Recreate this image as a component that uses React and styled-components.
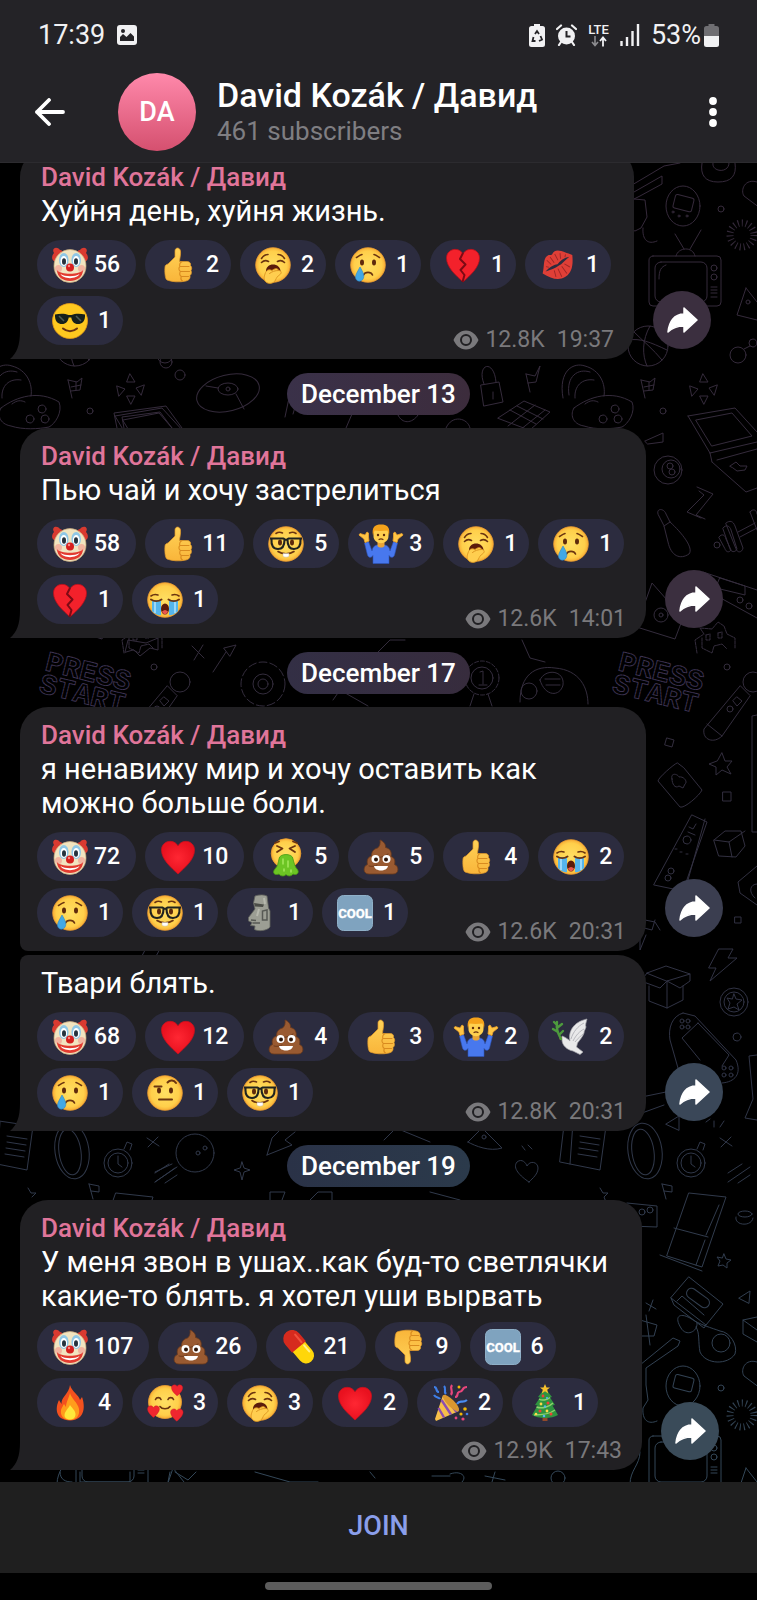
import React from 'react'

import styled, { createGlobalStyle } from 'styled-components'

const GlobalStyle = createGlobalStyle`
  * {
    box-sizing: border-box;
  }

  body {
    margin: 0;
    background: #000;
    color: #fff;
    font-family: Roboto, "Noto Sans", sans-serif;
  }

  button {
    margin: 0;
    padding: 0;
    border: 0;
    background: none;
    color: inherit;
    font: inherit;
    cursor: pointer;
  }

  svg {
    display: block;
    flex: none;
  }`

const Screen = styled.div`
  display: flex;
  flex-direction: column;
  height: 100vh;
  overflow: hidden;`

const TopBar = styled.header`
  flex: none;
  padding-bottom: 8px;
  background: #242327;
  border-bottom: 1px solid #2c2b2f;`
const StatusBar = styled.div`
  display: flex;
  align-items: center;
  height: 70px;
  padding: 0 38px 0 38px;
  color: #f1f1f3;
  font-size: 27px;
  line-height: 32px;`
const StatusGroup = styled.div`
  display: flex;
  align-items: center;
  gap: ${({ $gap }) => $gap}px;
  margin-left: ${({ $end }) => ($end ? 'auto' : '0')};`
const BatteryText = styled.span`
  display: flex;
  align-items: center;
  gap: 3px;`
const Network = styled.span`
  display: flex;
  flex-direction: column;
  align-items: center;
  font-size: 13px;
  font-weight: 500;
  line-height: 12px;`
const TitleBar = styled.div`
  display: flex;
  align-items: center;
  height: 84px;
  padding: 0 28px 0 30px;`
const IconButton = styled.button`
  display: flex;
  align-items: center;
  justify-content: center;
  width: ${({ $width }) => $width}px;
  height: 48px;`
const Avatar = styled.div`
  display: flex;
  align-items: center;
  justify-content: center;
  flex: none;
  width: 78px;
  height: 78px;
  margin: 0 21px 0 48px;
  border-radius: 50%;
  background: linear-gradient(#ff89ab, #d5506f);
  font-size: 27px;
  font-weight: 500;`
const Heading = styled.div`
  flex: 1;
  min-width: 0;`
const Title = styled.h1`
  margin: 0;
  font-size: 34px;
  font-weight: 500;
  line-height: 38px;
  white-space: nowrap;`
const Subtitle = styled.p`
  margin: 0;
  color: #7f7e82;
  font-size: 26px;
  line-height: 34px;`

const Feed = styled.main`
  position: relative;
  z-index: 0;
  display: flex;
  flex: 1;
  flex-direction: column;
  justify-content: flex-end;
  min-height: 0;
  padding: 0 12px 12px 20px;
  overflow: hidden;`
const Wallpaper = styled.svg`
  position: absolute;
  inset: 0;
  z-index: -1;
  width: 100%;
  height: 100%;`
const DateRow = styled.div`
  display: flex;
  flex: none;
  justify-content: center;
  padding: 14px 8px 13px 0;`
const DatePill = styled.time`
  padding: 0 14px;
  border-radius: 21px;
  background: ${({ $tint }) => $tint};
  font-size: 26px;
  font-weight: 500;
  line-height: 42px;`
const MessageRow = styled.article`
  display: flex;
  flex: none;
  align-items: flex-end;
  gap: 19px;
  margin-top: ${({ $joined }) => ($joined ? '4px' : '0')};`
const Bubble = styled.div`
  position: relative;
  flex: 1;
  max-width: ${({ $width }) => $width}px;
  padding: 11px 20px 6px 17px;
  border-radius: ${({ $joined, $tail }) =>
    `${$joined ? 8 : 28}px 28px 28px ${$tail ? 0 : 8}px`};
  background: #212023;`
const Tail = styled.svg`
  position: absolute;
  bottom: 0;
  left: -10px;`
const Author = styled.h2`
  margin: 1px 4px;
  color: #e0759a;
  font-size: 26px;
  font-weight: 500;
  line-height: 32px;`
const Text = styled.p`
  margin: 0 4px;
  font-size: 29px;
  line-height: 34px;`
const Reactions = styled.div`
  display: flex;
  flex-wrap: wrap;
  gap: 7px 9px;
  margin-top: ${({ $tight }) => ($tight ? '9px' : '12px')};`
const Reaction = styled.button`
  display: flex;
  align-items: center;
  justify-content: space-between;
  gap: 6px;
  min-width: 86px;
  height: 49px;
  padding: 0 ${({ $single }) => ($single ? 12 : 16)}px 0 15px;
  border-radius: 25px;
  background: #2c2c3f;
  font-size: 23px;
  font-weight: 500;`
const Meta = styled.div`
  display: flex;
  align-items: center;
  justify-content: flex-end;
  margin-top: ${({ $below }) => ($below ? '11px' : '-18px')};
  color: #7a797c;
  font-size: 23px;
  line-height: 26px;`
const Views = styled.span`
  margin: 0 12px 0 6px;`
const ShareButton = styled.button`
  display: flex;
  align-items: center;
  justify-content: center;
  flex: none;
  width: 58px;
  height: 58px;
  margin-bottom: ${({ $raised }) => ($raised ? 14 : 10)}px;
  border-radius: 50%;
  background: ${({ $tint }) => $tint};`

const BottomBar = styled.footer`
  flex: none;
  background: #1f1f1f;`
const JoinButton = styled.button`
  display: block;
  width: 100%;
  height: 91px;
  padding-bottom: 3px;
  color: #8a9eea;
  font-size: 27px;
  font-weight: 500;`
const NavBar = styled.div`
  display: flex;
  justify-content: center;
  flex: none;
  height: 27px;
  padding-top: 9px;
  background: #000;

  &:after {
    content: '';
    width: 30%;
    height: 8px;
    border-radius: 4px;
    background: #5c5c5c;
  }`

// emoji, all on a 36 x 36 grid

const Face = () => <circle cx="18" cy="18" r="17.3" fill="url(#face)" stroke="#f0a030" strokeWidth="0.8" />

const Eyes = ({ y = 15 }) => <g fill="#5f2a0c">
  <ellipse cx="12" cy={y} rx="2" ry="2.9" />
  <ellipse cx="24" cy={y} rx="2" ry="2.9" />
</g>

const line = { fill: 'none', stroke: '#6b3410', strokeWidth: 1.6, strokeLinecap: 'round', strokeLinejoin: 'round' }

const Thumb = () => <g>
  <path
    d="M5 20C5 18 6.500 17.500 8 17L15 10V4C15 0.500 19.500 -0.300 20.500 4C21 8 19.500 12 19.500 14.500H27C30 14.500 31 16.500 30.500 18.500C32 20 32 22 31 23.500C31.800 25.500 31.500 27.500 30 28.500C30.500 31.500 29 33.500 26 34C20 35.500 12 35 7 33C5 32 4.500 24 5 20Z"
    fill="url(#hand)" stroke="#e39a29" strokeWidth="0.7" />
  <path d="M20 19.500C19 17.500 20 15.500 22 14.800M20.500 24.500C18.500 23.500 18.500 20.500 20 19.500H29M21.500 29.500C19.500 29 19.200 26 20.500 24.500H29.500M21.500 29.500H28.500M21.500 29.500C20.500 31 21 33 22.500 34" fill="none" stroke="#d98b1f" strokeWidth="1.1" strokeLinecap="round" />
</g>

const heartPath = 'M18 35C11 28.500 1.500 20.500 1.500 11C1.500 2 13.500 -1 18 7C22.500 -1 34.500 2 34.500 11C34.500 20.500 25 28.500 18 35Z'

const EMOJI = {
  clown: <g>
    <path d="M6 15C-1 15 -1 9 2 6C-1 1 5 -1 8 3C13 3 10 12 6 15ZM30 15C37 15 37 9 34 6C37 1 31 -1 28 3C23 3 26 12 30 15Z" fill="#d93a30" />
    <ellipse cx="18" cy="19" rx="16" ry="16.500" fill="#f1e4c0" stroke="#c9a97a" strokeWidth="0.7" />
    <circle cx="6.500" cy="21.500" r="3.500" fill="#f2b4a0" />
    <circle cx="29.500" cy="21.500" r="3.500" fill="#f2b4a0" />
    <ellipse cx="11.800" cy="13" rx="4.800" ry="7" fill="#8fc7e6" />
    <ellipse cx="24.200" cy="13" rx="4.800" ry="7" fill="#8fc7e6" />
    <ellipse cx="11.800" cy="14" rx="3.300" ry="5" fill="#fff" />
    <ellipse cx="24.200" cy="14" rx="3.300" ry="5" fill="#fff" />
    <ellipse cx="12" cy="14.500" rx="2" ry="3.300" fill="#26323d" />
    <ellipse cx="24" cy="14.500" rx="2" ry="3.300" fill="#26323d" />
    <path d="M5 23C8 28 28 28 31 23C31 30 25 34 18 34S5 30 5 23Z" fill="#e23a2f" />
    <path d="M8.500 27C13 30 23 30 27.500 27C25 32.500 11 32.500 8.500 27Z" fill="#fff" />
    <circle cx="18" cy="20.500" r="4" fill="#d61f1f" />
    <circle cx="17" cy="19" r="1.200" fill="#ff8a80" />
  </g>,
  thumbsUp: <Thumb />,
  thumbsDown: <g transform="translate(0 36) scale(1 -1)"><Thumb /></g>,
  yawn: <g>
    <Face />
    <path d="M6.500 11.500C8 9 10.500 7.500 13 7.500M29.500 11.500C28 9 25.500 7.500 23 7.500M6.500 15.500C8.500 13.500 11 13 13.500 14.500M29.500 15.500C27.500 13.500 25 13 22.500 14.500" {...line} />
    <path d="M11 25C10 15 26 15 25.500 25Z" fill="#5b1b0b" />
    <path d="M10 27C11 23 14 22 17 23.500C20 21 23 21 23.500 23.500C26.500 23.500 27 26 25 27.500C22 29.500 21.500 31 20.500 33C19 36.500 13.500 37.500 11 35C8.500 33 9 30 10 27Z" fill="#ffce4f" stroke="#dc9420" strokeWidth="0.900" />
    <path d="M14.500 26.500C17 24.500 20 23.500 23.500 23.500" {...line} stroke="#dc9420" strokeWidth="1" />
  </g>,
  cry: <g>
    <Face />
    <Eyes y={15.5} />
    <path d="M6.500 10.500C8 9.500 10 8 12 7.500M29.500 10.500C28 9.500 26 8 24 7.500M13.500 28C15 24.500 21 24.500 22.500 28" {...line} />
    <path d="M10 20C13 25 14.500 28 13.500 31C12 35.500 6 35 5.500 30.500C5.500 27 8 24 10 20Z" fill="#42a8e6" stroke="#2d86c8" strokeWidth="0.6" />
  </g>,
  brokenHeart: <g>
    <path d={heartPath} fill="#f3212b" stroke="#b80f1b" strokeWidth="0.800" />
    <path d="M18 6L15 12L20.500 17.500L15.500 23L19.500 28L17.500 35" fill="none" stroke="#7d0a14" strokeWidth="2" strokeLinejoin="round" />
  </g>,
  kiss: <g transform="rotate(-32 18 18)">
    <path d="M0.500 17C6 12 8.500 4.500 14 4.500C16 4.500 17 6 18 6C19 6 20 4.500 22 4.500C27.500 4.500 31 12 35.500 17C31 26 26 32 18 32S5 26 0.500 17Z" fill="#df3f37" />
    <path d="M4 17C10 15 14 15.500 18 17C22 15.500 27 15 32 17C27 17.500 22 19.500 18 19C14 19.500 9 18 4 17Z" fill="#2c2c3f" />
    <path d="M11 8L12.500 14M15.500 7L16 14M21 7L20.500 14M26 9L23.500 14M10 27L12 20.500M15 30L16 21M21 30L20.500 21M27 26L24 20.500M7 13L9 15M30 13L28 15" stroke="#9c2626" strokeWidth="0.900" />
  </g>,
  sunglasses: <g>
    <circle cx="18" cy="18" r="17.500" fill="#ffc91f" stroke="#e99a17" strokeWidth="0.800" />
    <path d="M3 11.500C8 10.500 13 10.500 16.500 12H19.500C23 10.500 28 10.500 33 11.500V13.500C32.500 19 30 21 26 21C22 21 20 18.500 19.300 14.500H16.700C16 18.500 14 21 10 21C6 21 3.500 19 3 13.500Z" fill="#16201c" />
    <path d="M7 13L12 18M24 13L29 18" stroke="#4c5a54" strokeWidth="1.500" />
    <path d="M11 25.500C15 29 21 29 25 25.500" {...line} strokeWidth="2" />
  </g>,
  nerd: <g>
    <Face />
    <Eyes y={16.500} />
    <path d="M8 7.500C10 6 12.500 6 14.500 7M28 7.500C26 6 23.500 6 21.500 7" {...line} />
    <path d="M10 25.500C14 28.500 22 28.500 26 25.500" {...line} />
    <path d="M15 27.500H21V30C21 31.500 15 31.500 15 30Z" fill="#fff" stroke="#c9b9a0" strokeWidth="0.500" />
    <path d="M2 12.500H15.500C17 14 19 14 20.500 12.500H34M3.500 13.500C3 20 5.500 23 10 23C14.500 23 16.500 20 16.500 14M32.500 13.500C33 20 30.500 23 26 23C21.500 23 19.500 20 19.500 14" fill="none" stroke="#1f2220" strokeWidth="2.100" strokeLinejoin="round" />
  </g>,
  shrug: <g>
    <path d="M1.500 17L5.500 15.500L9 25C9.500 21.500 11 19.500 14 19H22C25 19.500 26.500 21.500 27 25L30.500 15.500L34.500 17L31.500 29C30.500 32 27.500 32 26 29.500V37.500H10V29.500C8.500 32 5.500 32 4.500 29Z" fill="#4878ee" stroke="#2d55bf" strokeWidth="0.600" />
    <path d="M2 16.500L1 13L-4 9L-3 7.500L2 9L4 6L5.500 7L5.500 11L6 15ZM34 16.500L35 13L40 9L39 7.500L34 9L32 6L30.500 7L30.500 11L30 15Z" fill="#ffc645" stroke="#f0a52b" strokeWidth="0.800" strokeLinejoin="round" />
    <path d="M14.500 16H21.500V20C20 22 16 22 14.500 20Z" fill="#e9a437" />
    <path d="M10.500 4C12 -1 24 -1 25.500 4V10C25.500 19.500 10.500 19.500 10.500 10Z" fill="#ffd04f" />
    <path d="M10 9.500C8.500 1 12 -1.500 18 -1.500S27.500 1 26 9.500L24.500 4.500C20 5 15 5 11.500 4.500Z" fill="#f5a21b" />
    <circle cx="15" cy="9" r="1.200" fill="#5f2a0c" />
    <circle cx="21" cy="9" r="1.200" fill="#5f2a0c" />
    <path d="M16 13.500C17 12.800 19 12.800 20 13.500" {...line} strokeWidth="1.200" />
  </g>,
  sob: <g>
    <Face />
    <path d="M4 14C6 12.500 8 12 11 13M32 14C30 12.500 28 12 25 13" {...line} />
    <path d="M5 18H14V33C10.500 34 7 31 5 29ZM31 18H22V33C25.500 34 29 31 31 29Z" fill="#55b5ec" />
    <path d="M8 20V31M28 20V31" stroke="#9bd8f8" strokeWidth="2" />
    <path d="M4 17.500C7 19.500 11.500 19.500 14.500 17.500M32 17.500C29 19.500 24.500 19.500 21.500 17.500" {...line} strokeWidth="2" />
    <ellipse cx="18" cy="27" rx="4" ry="5.500" fill="#5b1b0b" />
    <path d="M15 29.500C17 27.500 19 27.500 21 29.500C20 33 16 33 15 29.500Z" fill="#e8584f" />
  </g>,
  heart: <path d={heartPath} fill="url(#red)" stroke="#c8101c" strokeWidth="0.800" />,
  vomit: <g>
    <circle cx="18" cy="14.500" r="14.800" fill="url(#face)" stroke="#f0a030" strokeWidth="0.800" />
    <path d="M9 7L14.500 9.500L9 13M27 7L21.500 9.500L27 13M7 4L11 2.500M29 4L25 2.500" {...line} strokeWidth="1.800" />
    <path d="M11 20C11 14 25 14 25 20C26 24 27 28 29 30C32 33 29 37 25 35C23 38 19 37 18 35.500C16 38 12 37 11 35C6 37 4 33 7 30C10 27 10 24 11 20Z" fill="#6cc524" stroke="#469a14" strokeWidth="0.800" />
    <path d="M15 20V25M20 22V28M16 30V32M23 31V33" stroke="#a4e85c" strokeWidth="1.500" strokeLinecap="round" />
  </g>,
  poo: <g>
    <path d="M17 1C20 2 23 5 22.500 8.500C27 9.500 29 13 28 17.500C31.500 18.500 32.500 22 31.500 25.500C36 27 36.500 35 30 35H6C-0.500 35 0 27 4.500 25.500C3.500 21 5 18 8.500 17C8.500 12 11 10 14.500 9C17 7.500 17.500 4 17 1Z" fill="#995a31" stroke="#6b3a1c" strokeWidth="0.800" />
    <path d="M9 18C14 19.500 20 18.500 25 15M6 27C9 28 12 27 14 26" {...line} stroke="#6d3a1c" strokeWidth="1" />
    <circle cx="12.500" cy="20" r="4" fill="#fff" />
    <circle cx="23.500" cy="20" r="4" fill="#fff" />
    <circle cx="13" cy="20.500" r="2" fill="#2b1408" />
    <circle cx="23" cy="20.500" r="2" fill="#2b1408" />
    <path d="M11 27H25C24 33 12 33 11 27Z" fill="#fff" />
  </g>,
  moai: <g>
    <path d="M13 1C17 -0.500 22 -0.500 25 1L26.500 13L28 16V32C25 36 16 36.500 12.500 34.500L13 31L8.500 30.500L10 27.500L6.500 26V22.500L13 14L11.500 8Z" fill="#9c9e94" stroke="#62645e" strokeWidth="0.800" />
    <path d="M12 8L22 9.500L21 12L13 11.500Z" fill="#4b4d47" />
    <path d="M9 25L14 25.500M10.500 28L18 28M20.500 16V25H25V15Z" fill="none" stroke="#575954" strokeWidth="1.500" />
    <path d="M22 3L23 9M17 14L15 21" stroke="#b7b9ae" strokeWidth="2" />
  </g>,
  cool: <g>
    <rect x="0.500" y="0.500" width="35" height="35" rx="6" fill="#7fa3bf" stroke="#8fb0c8" />
    <text x="18" y="23" textAnchor="middle" fontFamily="Roboto, sans-serif" fontSize="13" fontWeight="700" fill="#fff" stroke="#fff" strokeWidth="0.400">COOL</text>
  </g>,
  dove: <g>
    <path d="M9 17C12 18 15 20 17 22C15 13 20 3 34 0C33 4 32 6 33 8C32 11 31 12 31 14C30 17 27 21 24.500 24L23.500 28L30 33L27 35.500L20 32C14 31 9 26 9 21Z" fill="#e9e9ea" stroke="#a5a5aa" strokeWidth="0.700" />
    <path d="M18 20C20 13 25 7 31 4M20 22C23 16 27 12 31 10M22 23C25 19 28 17 30 15" fill="none" stroke="#b7b7bd" strokeWidth="1" />
    <path d="M9 18L6 20L9 21Z" fill="#e39a29" />
    <path d="M8 20C5 14 3 10 4 3M5 13L0 10M4 9L9 5M6 16L10 12M4 6L1 3" fill="none" stroke="#4d9a3d" strokeWidth="2.400" strokeLinecap="round" />
  </g>,
  eyebrow: <g>
    <Face />
    <Eyes y={15.500} />
    <path d="M7.500 11.500H14.500M20.500 7.500C23 4.500 27 5 29 8M12 24.500H25" {...line} strokeWidth="2" />
  </g>,
  pill: <g transform="rotate(50 18 18)">
    <rect x="-1" y="10" width="38" height="16" rx="8" fill="#ffd60a" />
    <path d="M18 9H7.500A9 9 0 0 0 7.500 27H18Z" fill="#d62a1e" />
    <path d="M6 13H16" stroke="#f0503c" strokeWidth="2" strokeLinecap="round" />
    <path d="M20 13H28" stroke="#fff08a" strokeWidth="2" strokeLinecap="round" />
  </g>,
  fire: <g>
    <path d="M18 0C20 7 27 10 28 15L30 12C33 20 34 35 18 35.500C3 35 3 23 7 15L9.500 19C9 12 17 9 18 0Z" fill="#f4511e" />
    <path d="M18 8C19 13 26 18 27 24C28 31 24 35 18 35S8 31 9 25C10 22 11 21 12 19L14 22C14 17 17 13 18 8Z" fill="#ff9d1c" />
    <path d="M18 20C20 23 24 26 23.500 30C23 33 21 34.500 18 34.500S12.500 33 12.500 30C13 26 16 24 18 20Z" fill="#ffe83b" />
  </g>,
  hearts: <g>
    <circle cx="18" cy="17" r="16.500" fill="url(#face)" stroke="#f0a030" strokeWidth="0.800" />
    <path d="M8.500 14.500C9.500 12 13 12 14 14.500M21 14.500C22 12 25.500 12 26.500 14.500M13 21.500C15 24.500 21 24.500 23 21.500" {...line} />
    <g fill="#f0262f" stroke="#c3141f" strokeWidth="1">
      <path d={heartPath} transform="translate(24 -1) scale(0.340)" />
      <path d={heartPath} transform="translate(0 20) scale(0.360)" />
      <path d={heartPath} transform="translate(23 23) scale(0.380)" />
    </g>
  </g>,
  party: <g>
    <path d="M11 10L27 26L4 36L3 34Z" fill="#f7c04a" />
    <path d="M9.500 15L19 29.500M6.500 23L12 32.500M12 11L24.500 27" stroke="#8d4fb0" strokeWidth="2.400" />
    <ellipse cx="19" cy="18" rx="3.500" ry="11" transform="rotate(-45 19 18)" fill="#d99730" />
    <path d="M2 2C6 2 3 7 7 7M12 1C15 4 11 6 14 9M2 10C4 13 7 12 8 14" fill="none" stroke="#3f7fe8" strokeWidth="2.200" />
    <path d="M20 0C17 4 22 6 19 10M35 2C29 2 32 7 27 7C24 8 27 12 23 12" fill="none" stroke="#e8467c" strokeWidth="2.200" />
    <path d="M25 19C28 14 30 19 35 15" fill="none" stroke="#4a8cf0" strokeWidth="2.200" />
    <g fill="#f2b705"><circle cx="27" cy="2" r="1.500" /><circle cx="33" cy="24" r="1.800" /><circle cx="29" cy="29" r="1.600" /></g>
    <g fill="#e8467c"><circle cx="31" cy="34" r="1.600" /><circle cx="24" cy="33" r="1.400" /></g>
    <circle cx="35" cy="29" r="1.300" fill="#3f7fe8" />
  </g>,
  tree: <g>
    <path d="M15.500 30H20.500V36H15.500Z" fill="#93492a" />
    <path d="M18 3L25 12L23 12.500L28 20L25.500 20.500L31 30C25 34 11 34 5 30L10.500 20.500L8 20L13 12.500L11 12Z" fill="#2f9440" />
    <path d="M12 14C15 16 20 15 23 12.500M9.500 22C15 24 22 22 26 18M7 30C15 30 24 28 28 25" fill="none" stroke="#8fd36a" strokeWidth="1.400" />
    <path d="M18 -1L19.500 2.500H23L20.200 4.800L21.200 8.500L18 6.300L14.800 8.500L15.800 4.800L13 2.500H16.500Z" fill="#f8c22c" />
    <g fill="#ef4136"><circle cx="16" cy="11" r="1.400" /><circle cx="21" cy="18" r="1.500" /><circle cx="13" cy="26" r="1.500" /><circle cx="24" cy="29" r="1.500" /></g>
    <g fill="#ffd84a"><circle cx="14" cy="19" r="1.400" /><circle cx="20" cy="26" r="1.400" /><circle cx="9" cy="29" r="1.300" /></g>
    <g fill="#58b4f2"><circle cx="18" cy="21.500" r="1.200" /><circle cx="17" cy="31" r="1.300" /><circle cx="20" cy="13" r="1.100" /></g>
  </g>
}

const Emoji = ({ name }) => <svg width="36" height="36" viewBox="0 0 36 36" overflow="visible" role="img" aria-label={name}>
  {EMOJI[name]}
</svg>

const EmojiPaints = () => <defs>
  <radialGradient id="face">
    <stop offset="0" stopColor="#ffdf63" />
    <stop offset="0.800" stopColor="#ffcf4a" />
    <stop offset="1" stopColor="#f7ae37" />
  </radialGradient>
  <linearGradient id="hand" x1="0" y1="0" x2="0" y2="1">
    <stop offset="0" stopColor="#ffd257" />
    <stop offset="1" stopColor="#f9b53a" />
  </linearGradient>
  <radialGradient id="red">
    <stop offset="0" stopColor="#ff2733" />
    <stop offset="1" stopColor="#e9111f" />
  </radialGradient>
</defs>

// one column of doodles, repeated every 573 units across the feed

const Doodles = () => <g id="doodles">
  <path d="M627 188L664 166L680 163M627 196L662 176V184L640 196L634 199L645 200L647 217L641 228L635 231L627 228M643 228C642 240 648 245 657 241" />
  <path d="M702 163C700 175 705 182 718 182C731 182 737 176 735 163M713 163C711 172 729 174 729 163" />
  <ellipse cx="683" cy="206" rx="17" ry="20" />
  <rect x="674" y="196" width="19" height="14" rx="2" transform="rotate(14 683 203)" />
  <circle cx="673" cy="212" r="1" /><circle cx="679" cy="216" r="1" /><circle cx="687" cy="216" r="1" />
  <circle cx="721" cy="209" r="3" />
  <circle cx="742" cy="235" r="12" strokeWidth="7" strokeDasharray="1 3" strokeLinecap="butt" />
  <path d="M757 182C745 178 740 190 744 196L760 208" />
  <rect x="649" y="256" width="72" height="50" rx="4" /><rect x="655" y="262" width="52" height="40" rx="6" />
  <circle cx="714" cy="268" r="3" /><circle cx="714" cy="277" r="3" />
  <path d="M711 287H717M711 290H717M711 293H717M711 297H717M659 279C659 270 661 267 666 265M684 249L675 234M690 249L701 230M676 256C678 247 693 246 695 256" />
  <path d="M746 288L737 315L757 320M746 288L757 302" /><circle cx="748" cy="302" r="2" />
  <circle cx="648" cy="346" r="20" /><path d="M629 340C640 338 650 342 667 350M650 326C642 340 642 355 647 366M634 332C642 340 654 350 662 360" />
  <circle cx="738" cy="355" r="8" /><circle cx="753" cy="343" r="4" /><path d="M744 349L750 346" />
  <path d="M563 398C558 370 574 362 585 366C600 370 606 384 604 396M569 395C566 376 578 368 590 372M575 398C574 386 582 378 594 380" />
  <path d="M574 408C590 396 612 390 632 402C636 412 628 424 622 427C612 429 596 430 584 426C572 424 570 414 574 408ZM585 404C590 400 594 400 598 402" />
  <circle cx="615" cy="409" r="4" /><circle cx="603" cy="419" r="4" /><circle cx="618" cy="419" r="4" />
  <path d="M645 398L641 380M641 380L650 382L655 378L653 390L644 391M649 382V390M654 385L644 387" />
  <path d="M703 374L708 382L700 382ZM690 386L698 389L692 396ZM717 385L709 388L714 395ZM700 396H708L704 404Z" />
  <circle cx="663" cy="411" r="3" />
  <path d="M688 416L735 408L757 432M688 416L710 453M696 420L732 413L752 436L712 446ZM710 453L757 442M712 462L746 492L757 488M710 453L712 462M717 460L757 449M730 466L736 462L740 466H747L745 470L737 471L733 468Z" />
  <circle cx="668" cy="470" r="14" /><circle cx="671" cy="469" r="9" /><circle cx="670" cy="466" r="3" /><circle cx="672" cy="472" r="3" />
  <path d="M645 441L663 433V442L648 444ZM697 487L713 494L696 515L705 519M699 491L704 495L687 512L701 518" />
  <path d="M658 514C656 508 664 508 666 514L670 522C682 533 694 548 689 554C680 560 671 556 668 542L664 526ZM664 526L670 522" />
  <circle cx="717" cy="545" r="3" />
  <path d="M719 537C722 533 725 535 726 539L731 550C729 553 726 552 725 549ZM723 528C726 524 730 526 731 530L737 549C735 553 731 552 730 549ZM726 523C730 520 733 521 735 526L743 548C742 553 737 553 736 549ZM738 532L755 523M740 537L757 528M750 512C753 508 757 510 757 514M750 512L757 530" />
  <path d="M627 624L675 639L683 618L652 583L637 625" /><circle cx="661" cy="615" r="7" /><circle cx="661" cy="615" r="2" />
  <path d="M703 572L757 590M706 590L757 618M720 578L745 586V595L716 588Z" /><circle cx="740" cy="600" r="3" /><circle cx="749" cy="606" r="3" />
  <path d="M697 653L695 640L704 634L700 628L712 629L718 622L724 626L727 634L735 638V648M702 638V648L712 653L714 646L722 644L727 649M706 635V640H710V634ZM718 633V638H722V632Z" strokeDasharray="3 1" />
  <g fontFamily="Liberation Mono, monospace" fontSize="29" fontWeight="700" stroke="#3d3352" strokeDasharray="2 1">
    <text transform="translate(617 670) rotate(14)">PRESS</text>
    <text transform="translate(611 692) rotate(14)">START</text>
  </g>
  <circle cx="727" cy="667" r="3" />
  <circle cx="753" cy="682" r="10" /><path d="M740 686L704 729C702 740 714 744 722 736L750 696ZM707 724L722 736M737 697L742 701L737 706L733 701Z" /><circle cx="730" cy="709" r="3" />
  <path d="M667 738L674 740L672 747L665 745ZM722 753L725 761L732 761L727 767L731 774L722 770L716 775V767L709 764L717 761Z" />
  <path d="M677 763C674 764 658 778 658 781L680 807C684 809 700 795 702 790L684 768ZM672 779C670 772 678 774 679 777C684 776 688 782 685 784L683 788L679 786C675 789 672 784 672 779Z" />
  <path d="M723 792H731V801H723ZM757 715L752 716V832H757M735 917H741V923H735Z" />
  <path d="M692 815L707 822L683 891L654 885ZM705 819L688 880M689 827L693 829L696 824M688 832L695 835" /><circle cx="687" cy="840" r="4" /><circle cx="671" cy="871" r="3" /><circle cx="668" cy="878" r="3" />
  <path d="M675 849H677M680 852H682M686 854H688M714 840L725 831H741L745 846L736 857L719 856ZM714 840L729 842L745 831M729 842L732 857" />
  <path d="M757 866L738 882L740 893L757 905M757 884C750 884 748 892 755 898" />
  <path d="M627 910L640 915L645 920L655 922L660 930M632 925L652 930L655 920M627 944L640 925V950L646 935" />
  <path d="M647 973L666 966L690 974L667 981ZM647 973L641 981L660 988L667 981L680 988L690 981L690 974M649 986V1001L667 1008L683 1000V986M667 981V1008" />
  <path d="M719 949H733L728 958H737L710 981L716 968H709Z" />
  <circle cx="734" cy="1002" r="14" /><circle cx="734" cy="1002" r="10" /><path d="M734 994L736 999L742 1000L737 1004L739 1010L734 1007L728 1009L730 1003L727 998L732 999Z" />
  <circle cx="737" cy="1037" r="4" />
  <path d="M683 1013C672 1016 668 1028 670 1040L678 1068M683 1013L695 1016L736 1060C742 1074 735 1082 722 1083M698 1023L729 1055L722 1066M698 1023L682 1038L700 1060" />
  <circle cx="682" cy="1021" r="2" /><circle cx="688" cy="1021" r="2" /><circle cx="682" cy="1027" r="2" /><circle cx="688" cy="1027" r="2" />
  <circle cx="724" cy="1068" r="2" /><circle cx="731" cy="1068" r="2" /><circle cx="724" cy="1075" r="2" /><circle cx="731" cy="1075" r="2" />
  <path d="M757 1055L749 1056L753 1099L745 1118L757 1120M627 1100L666 1092M642 1113L664 1105M666 1124L679 1116V1130ZM706 1122L710 1119M714 1127L714 1121M720 1127L724 1121" />
  <ellipse cx="645" cy="1151" rx="17" ry="28" transform="rotate(-8 645 1151)" /><ellipse cx="643" cy="1152" rx="11" ry="23" transform="rotate(-8 643 1152)" />
  <circle cx="691" cy="1163" r="14" /><circle cx="691" cy="1163" r="10" /><path d="M691 1156V1164L695 1167M697 1149L700 1142L705 1144L703 1150M720 1138L732 1146M731 1137L721 1147M728 1173L742 1164M728 1182L750 1167M738 1183L750 1175M662 1184L666 1199M662 1184L672 1186V1192L664 1191" />
  <path d="M565 1120L606 1126L600 1170L560 1162ZM573 1122L570 1164M580 1136L600 1139M580 1142L599 1145M579 1148L598 1151M578 1154L597 1157" />
  <path d="M689 1193L726 1197L702 1267L667 1256ZM674 1228L708 1237M719 1205L706 1235M660 1255L702 1271M705 1240L696 1265" /><ellipse cx="745" cy="1214" rx="7" ry="3" /><path d="M736 1217C734 1226 752 1227 753 1218" />
  <path d="M627 1203L657 1206V1227L630 1226" /><circle cx="642" cy="1212" r="3" /><circle cx="650" cy="1210" r="3" />
  <path d="M724 1254L726 1259L731 1260L727 1263L727 1268L723 1265L718 1266L720 1261L717 1257L722 1258ZM739 1298L750 1291L749 1303ZM646 1303L656 1309M653 1300L649 1311M640 1320L657 1325L654 1336L640 1336ZM646 1315L650 1345" />
  <path d="M689 1277L723 1304L706 1325L671 1298ZM671 1298L674 1305L704 1328L706 1325M677 1301L682 1296L704 1315" /><rect x="685" y="1293" width="26" height="10" rx="5" transform="rotate(36 698 1298)" />
  <path d="M697 1323C698 1332 686 1337 681 1328C674 1317 679 1312 690 1318C700 1325 712 1328 720 1331C730 1332 738 1345 735 1354C728 1365 706 1365 700 1352C698 1342 700 1333 696 1327" /><circle cx="721" cy="1343" r="9" />
  <path d="M757 1317L743 1320V1334L757 1342M743 1320L757 1330M757 1362C745 1358 740 1370 744 1376L760 1388" />
  <path d="M640 1365L673 1338L680 1341L678 1346L646 1368V1385L648 1400L643 1408C642 1420 648 1425 657 1421" />
  <ellipse cx="683" cy="1386" rx="17" ry="20" /><rect x="674" y="1376" width="19" height="14" rx="2" transform="rotate(14 683 1383)" />
  <circle cx="721" cy="1388" r="3" /><circle cx="742" cy="1415" r="12" strokeWidth="7" strokeDasharray="1 3" strokeLinecap="butt" />
  <rect x="649" y="1436" width="72" height="50" rx="4" /><rect x="655" y="1442" width="52" height="40" rx="6" /><circle cx="714" cy="1448" r="3" /><circle cx="714" cy="1457" r="3" />
  <path d="M711 1467H717M711 1470H717M711 1473H717M746 1468L737 1495M746 1468L757 1482M640 1452C640 1465 630 1470 630 1484" />
</g>

// doodles that only show between the bubbles

const GapDoodles = () => <g>
  <ellipse cx="228" cy="393" rx="32" ry="18" transform="rotate(-14 228 393)" /><ellipse cx="228" cy="389" rx="10" ry="6" /><circle cx="228" cy="389" r="2" />
  <path d="M236 394L244 409M206 386L218 388" />
  <circle cx="180" cy="375" r="5" /><circle cx="166" cy="362" r="6" />
  <path d="M117 428L114 413L166 406L182 428M124 428L122 417L160 412L172 428" />
  <path d="M285 417L289 398L297 400L293 414M340 414H352L346 428M398 415C402 424 412 424 418 415M446 428C452 414 468 418 470 428" />
  <path d="M481 385L499 382L503 402L484 406ZM484 384C476 364 494 358 496 382M493 392V399" />
  <path d="M530 398L526 380M526 380L535 382L540 372L536 388L528 389" transform="translate(0 -6)" />
  <path d="M498 418L524 401L550 412L530 430ZM510 410L536 424M517 406L543 419M508 426L535 405M520 430L545 410" />
  <path d="M125 652L128 640L146 643L158 638V650L150 648L140 656L134 650ZM192 646L204 658M203 645L194 660M213 672L226 652M224 648L236 645L230 656Z" />
  <circle cx="263" cy="684" r="22" strokeDasharray="8 3" /><circle cx="263" cy="684" r="10" /><circle cx="263" cy="684" r="5" />
  <path d="M333 700L340 690L368 706M372 658L390 640H405" />
  <circle cx="482" cy="678" r="17" strokeDasharray="4 2" /><circle cx="482" cy="678" r="11" /><path d="M480 672L483 671V684M479 685H487M474 694L470 706M488 694L492 706" />
  <path d="M520 702C520 675 535 665 555 668C580 670 588 688 588 704M540 680C545 668 565 670 563 685C560 697 545 697 540 680ZM545 679H560M546 685H560" /><circle cx="529" cy="691" r="8" />
  <path d="M522 640L530 658L545 662" />
  <circle cx="195" cy="1153" r="19" /><circle cx="205" cy="1148" r="2" /><circle cx="198" cy="1153" r="2" />
  <path d="M242 1162L244 1168L250 1170L244 1172L242 1180L240 1172L234 1170L240 1168ZM267 1155L272 1138L280 1130M267 1155L292 1145L285 1140L295 1132M155 1172L172 1164M155 1182L175 1168" />
  <path d="M384 1140L396 1128L430 1142M468 1142L482 1128L502 1148C490 1152 475 1146 468 1142ZM529 1182C520 1176 512 1168 517 1162C522 1158 526 1163 527 1166C530 1160 538 1162 538 1168C538 1174 533 1178 529 1182ZM522 1146L525 1150M528 1145L532 1149" />
  <circle cx="484" cy="1137" r="2" /><path d="M270 1200V1192H285L282 1200M310 1200L318 1192H332V1200M600 1188L603 1193L608 1193L604 1197L606 1202M28 1188L31 1193L36 1193L32 1197M430 1192L460 1200" />
  <path d="M60 1472C60 1480 66 1482 72 1482M80 1472V1482H130V1472M170 1472L168 1482M175 1472L188 1480L196 1472M255 1472L290 1482H318M370 1472L375 1478M432 1476H450M450 1474C460 1470 468 1476 462 1482M485 1476L505 1480M495 1472L492 1482" /><circle cx="558" cy="1478" r="7" />
</g>

const FeedWallpaper = () => <Wallpaper viewBox="0 163 757 1319" preserveAspectRatio="xMidYMin slice" aria-hidden="true">
  <EmojiPaints />
  <defs>
    <linearGradient id="ink" gradientUnits="userSpaceOnUse" x1="0" y1="163" x2="0" y2="1482">
      <stop offset="0" stopColor="#35293a" />
      <stop offset="0.400" stopColor="#332c3c" />
      <stop offset="0.700" stopColor="#2f3446" />
      <stop offset="1" stopColor="#334758" />
    </linearGradient>
  </defs>
  <g fill="none" stroke="url(#ink)" strokeLinejoin="round" strokeLinecap="round">
    <Doodles />
    <use href="#doodles" x="-573" />
    <GapDoodles />
  </g>
</Wallpaper>

const ShareIcon = () => <svg width="32" height="28" viewBox="-16 -14 32 28">
  <path d="M2 -12L15 0L2 12V6C-6 6 -10 8 -14 12C-13 2 -8 -6 2 -6Z" fill="#fff" stroke="#fff" strokeWidth="1.500" strokeLinejoin="round" />
</svg>

const EyeIcon = () => <svg width="26" height="20" viewBox="0 0 26 20">
  <path fillRule="evenodd" d="M13 0.500C19 0.500 23.500 5 25.500 10C23.500 15 19 19.500 13 19.500S2.500 15 0.500 10C2.500 5 7 0.500 13 0.500ZM13 4A6 6 0 1 0 13 16A6 6 0 1 0 13 4Z" fill="currentColor" />
  <circle cx="13" cy="10" r="4" fill="currentColor" />
</svg>

const PictureIcon = () => <svg width="20" height="20" viewBox="0 0 20 20">
  <rect width="20" height="20" rx="3" fill="currentColor" />
  <circle cx="6" cy="6" r="2" fill="#242327" />
  <path d="M3 16V12L6 9L9.500 12L13.500 8L17 11.500V16Z" fill="#242327" />
</svg>

const BatterySaverIcon = () => <svg width="16" height="23" viewBox="0 0 16 23">
  <path d="M5 0H11V2H13.500Q16 2 16 4.500V20.500Q16 23 13.500 23H2.500Q0 23 0 20.500V4.500Q0 2 2.500 2H5Z" fill="currentColor" />
  <path d="M6 10L8 7L10 10M11.500 12L13 15.500L10 17M6.500 17H3.500L4.500 13" fill="none" stroke="#242327" strokeWidth="1.800" />
</svg>

const AlarmIcon = () => <svg width="21" height="22" viewBox="0 0 21 22">
  <circle cx="10.500" cy="12" r="8.500" fill="currentColor" />
  <path d="M1 5L5 1.500M20 5L16 1.500M5 18L3 21M16 18L18 21" stroke="currentColor" strokeWidth="2.200" strokeLinecap="round" />
  <path d="M10.500 7V12.500H14.500" fill="none" stroke="#242327" strokeWidth="2" />
</svg>

const DataArrowsIcon = () => <svg width="18" height="11" viewBox="0 0 18 11">
  <path d="M5 0V9M2 6L5 9.500L8 6" fill="none" stroke="#8d8c90" strokeWidth="1.600" />
  <path d="M13 10.500V1.500M10 5L13 1.500L16 5" fill="none" stroke="currentColor" strokeWidth="1.800" />
</svg>

const SignalIcon = () => <svg width="20" height="22" viewBox="0 0 20 22">
  <path d="M1.500 17V22M7 13V22M12.500 7V22M18 0V22" stroke="currentColor" strokeWidth="2.400" />
</svg>

const BatteryIcon = () => <svg width="15" height="23" viewBox="0 0 15 23">
  <path d="M4.500 0H10.500V2H12.500Q15 2 15 4.500V12H0V4.500Q0 2 2.500 2H4.500Z" fill="#6f6e72" />
  <path d="M0 12H15V20.500Q15 23 12.500 23H2.500Q0 23 0 20.500Z" fill="currentColor" />
</svg>

const BackIcon = () => <svg width="30" height="28" viewBox="0 0 30 28">
  <path d="M14 2L2 14L14 26M2 14H28" fill="none" stroke="#fff" strokeWidth="3.800" strokeLinecap="round" strokeLinejoin="round" />
</svg>

const MoreIcon = () => <svg width="8" height="30" viewBox="0 0 8 30">
  <g fill="#fff"><circle cx="4" cy="4" r="3.900" /><circle cx="4" cy="15" r="3.900" /><circle cx="4" cy="26" r="3.900" /></g>
</svg>

const CHANNEL = 'David Kozák / Давид'

const FEED = [
  {
    width: 614,
    text: 'Хуйня день, хуйня жизнь.',
    reactions: [['clown', 56], ['thumbsUp', 2], ['yawn', 2], ['cry', 1], ['brokenHeart', 1], ['kiss', 1], ['sunglasses', 1]],
    views: '12.8K',
    time: '19:37',
    tint: '#3b2f3f',
    tail: true
  },
  { date: 'December 13', tint: 'linear-gradient(90deg, #3a3149, #3c2c3c)' },
  {
    width: 626,
    text: 'Пью чай и хочу застрелиться',
    reactions: [['clown', 58], ['thumbsUp', 11], ['nerd', 5], ['shrug', 3], ['yawn', 1], ['cry', 1], ['brokenHeart', 1], ['sob', 1]],
    views: '12.6K',
    time: '14:01',
    tint: '#3b2f3f',
    tail: true
  },
  { date: 'December 17', tint: 'linear-gradient(90deg, #332f45, #372c3d)' },
  {
    width: 626,
    text: 'я ненавижу мир и хочу оставить как можно больше боли.',
    reactions: [['clown', 72], ['heart', 10], ['vomit', 5], ['poo', 5], ['thumbsUp', 4], ['sob', 2], ['cry', 1], ['nerd', 1], ['moai', 1], ['cool', 1]],
    views: '12.6K',
    time: '20:31',
    tint: '#3b3e50'
  },
  {
    width: 626,
    joined: true,
    text: 'Твари блять.',
    reactions: [['clown', 68], ['heart', 12], ['poo', 4], ['thumbsUp', 3], ['shrug', 2], ['dove', 2], ['cry', 1], ['eyebrow', 1], ['nerd', 1]],
    views: '12.8K',
    time: '20:31',
    tint: '#3a4758',
    tail: true
  },
  { date: 'December 19', tint: 'linear-gradient(90deg, #2a3247, #2b3a4b)' },
  {
    width: 622,
    text: 'У меня звон в ушах..как буд-то светлячки какие-то блять. я хотел уши вырвать',
    reactions: [['clown', 107], ['poo', 26], ['pill', 21], ['thumbsDown', 9], ['cool', 6], ['fire', 4], ['hearts', 3], ['yawn', 3], ['heart', 2], ['party', 2], ['tree', 1]],
    views: '12.9K',
    time: '17:43',
    tint: '#3a4b59',
    tail: true,
    metaBelow: true
  }
]

const Message = ({ width, joined, text, reactions, views, time, tint, tail, metaBelow }) => <MessageRow $joined={joined}>
  <Bubble $width={width} $joined={joined} $tail={tail}>
    {!joined && <Author>{CHANNEL}</Author>}
    <Text>{text}</Text>
    <Reactions $tight={metaBelow}>
      {reactions.map(([name, count]) =>
        <Reaction key={name} type="button" $single={count < 10}>
          <Emoji name={name} />
          <span>{count}</span>
        </Reaction>
      )}
    </Reactions>
    <Meta $below={metaBelow}>
      <EyeIcon />
      <Views>{views}</Views>
      <time>{time}</time>
    </Meta>
    {tail && <Tail width="12" height="28" viewBox="0 0 12 28">
      <path d="M10 0C10 14 7 22 0 28H12V0Z" fill="#212023" />
    </Tail>}
  </Bubble>
  <ShareButton type="button" aria-label="Share" $tint={tint} $raised={!tail}><ShareIcon /></ShareButton>
</MessageRow>

const App = () => <Screen>
  <GlobalStyle />
  <TopBar>
    <StatusBar>
      <StatusGroup $gap={12}>
        <span>17:39</span>
        <PictureIcon />
      </StatusGroup>
      <StatusGroup $gap={11} $end>
        <BatterySaverIcon />
        <AlarmIcon />
        <Network>LTE<DataArrowsIcon /></Network>
        <SignalIcon />
        <BatteryText>53%<BatteryIcon /></BatteryText>
      </StatusGroup>
    </StatusBar>
    <TitleBar>
      <IconButton type="button" aria-label="Back" $width={40}><BackIcon /></IconButton>
      <Avatar>DA</Avatar>
      <Heading>
        <Title>{CHANNEL}</Title>
        <Subtitle>461 subscribers</Subtitle>
      </Heading>
      <IconButton type="button" aria-label="More" $width={32}><MoreIcon /></IconButton>
    </TitleBar>
  </TopBar>
  <Feed>
    <FeedWallpaper />
    {FEED.map(item => item.date
      ? <DateRow key={item.date}><DatePill $tint={item.tint}>{item.date}</DatePill></DateRow>
      : <Message key={item.text} {...item} />
    )}
  </Feed>
  <BottomBar>
    <JoinButton type="button">JOIN</JoinButton>
    <NavBar />
  </BottomBar>
</Screen>

export default App
